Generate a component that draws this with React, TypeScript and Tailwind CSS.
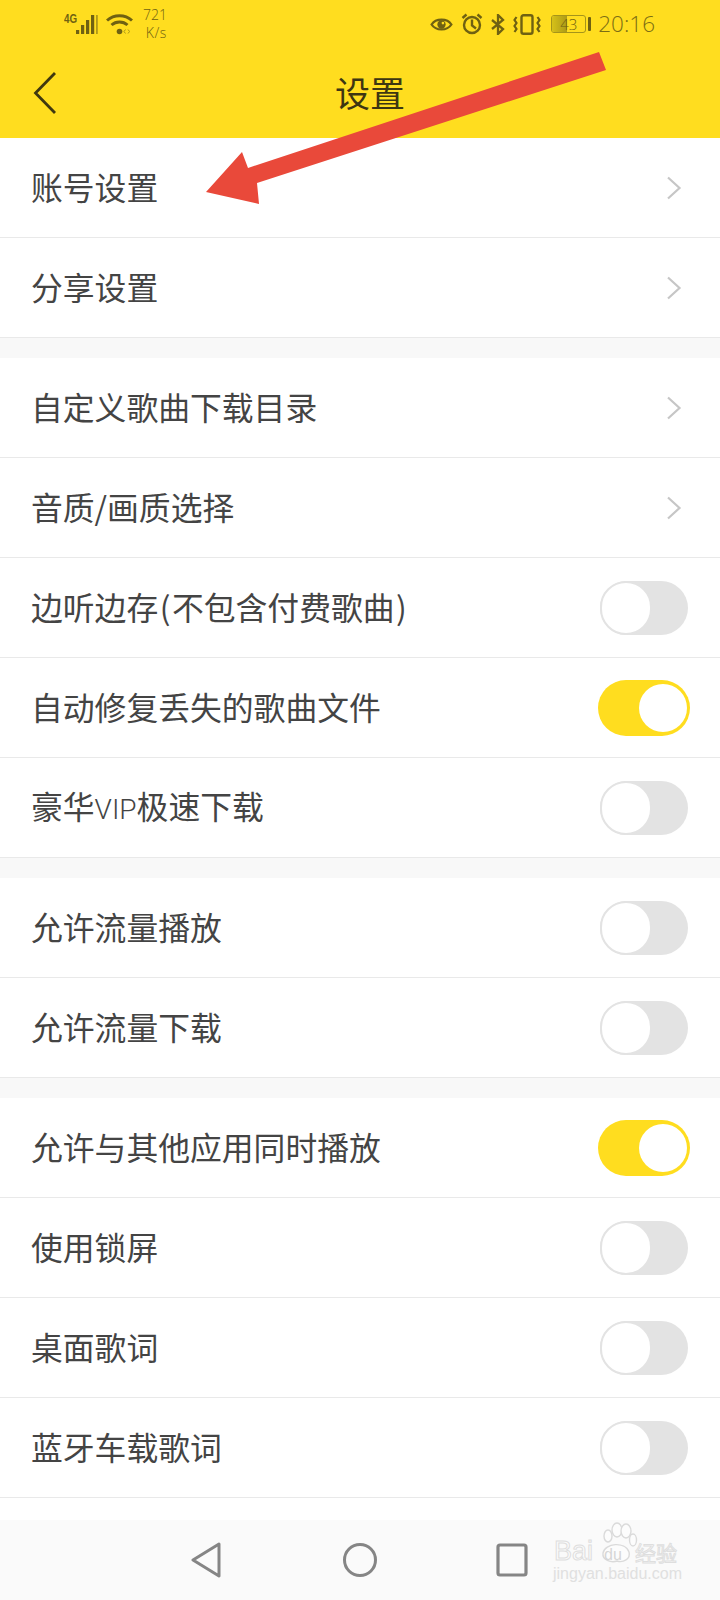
import React from "react";

const FONT = "[font-family:'Noto_Sans_CJK_SC','Noto_Sans',sans-serif]";

function Chevron() {
  return (
    <svg width="16" height="24" viewBox="0 0 16 24" fill="none" className="mr-[38px]">
      <path d="M2 1.5 L13.5 12 L2 22.5" stroke="#c6c6c6" strokeWidth="2.2" />
    </svg>
  );
}

function Toggle({ on }: { on?: boolean }) {
  if (on) {
    return (
      <div className="mr-[30px] flex h-[56px] w-[92px] items-center justify-end rounded-full bg-[#ffdd1f] pr-[3px]">
        <div className="h-[48px] w-[48px] rounded-full bg-white" />
      </div>
    );
  }
  return (
    <div className="mr-[32px] flex h-[54px] w-[88px] items-center rounded-full bg-[#e3e3e3]">
      <div className="h-[54px] w-[52px] rounded-full border-2 border-[#e3e3e3] bg-white" />
    </div>
  );
}

function Row({ label, kind }: { label: React.ReactNode; kind: "chev" | "on" | "off" }) {
  return (
    <div className="flex h-[100px] items-center justify-between border-b border-[#e9e9e9] bg-white pl-[31px]">
      <span className="pb-[2px] text-[31.8px] leading-none text-[#444444]">{label}</span>
      {kind === "chev" ? <Chevron /> : <Toggle on={kind === "on"} />}
    </div>
  );
}

function Gap() {
  return <div className="h-[20px] bg-[#f8f8f8]" />;
}

const ink = "#6f6112";

function StatusLeft() {
  return (
    <div className="flex items-start">
      <span className="mt-[11px] w-[12px] origin-left scale-x-75 text-[13px] font-bold leading-[15px] text-[#6f6112] [font-family:'Liberation_Sans',sans-serif]">
        4G
      </span>
      <svg width="22" height="22" viewBox="0 0 22 22" className="mt-[13px]">
        <rect x="0" y="17" width="3.2" height="4" fill={ink} />
        <rect x="5" y="12" width="3.2" height="9" fill={ink} />
        <rect x="10" y="7" width="3.2" height="14" fill={ink} />
        <rect x="15" y="2" width="3.2" height="19" fill={ink} />
        <rect x="20" y="2" width="1.8" height="19" fill={ink} opacity="0.55" />
      </svg>
      <svg width="27" height="22" viewBox="0 0 27 22" fill="none" className="ml-[8px] mt-[13px]" stroke={ink} strokeWidth="3">
        <path d="M1 7.5 C8 1 19 1 26 7.5" />
        <path d="M5.5 12 C10 8 17 8 21.5 12" />
        <circle cx="13.5" cy="18.5" r="2.8" fill={ink} stroke="none" />
        <path d="M19.5 16.5 L18 18.5 L19.5 20.5 M22 16.5 L23.5 18.5 L22 20.5" stroke="#a8951a" strokeWidth="1" />
      </svg>
      <div className="ml-[10px] mt-[6px] flex w-[24px] flex-col items-end text-[14px] font-light leading-[18px] text-[#6f6112] [font-family:'Open_Sans',sans-serif]">
        <span>721</span>
        <span className="tracking-[0.6px]">K/s</span>
      </div>
    </div>
  );
}

function StatusRight() {
  return (
    <div className="flex items-center">
      <svg width="23" height="17" viewBox="0 0 24 18" fill="none" stroke={ink} strokeWidth="2.4">
        <path d="M1.5 9 C6 2 18 2 22.5 9 C18 16 6 16 1.5 9 Z" />
        <circle cx="12" cy="9" r="4.4" fill={ink} stroke="none" />
        <circle cx="13.5" cy="7.5" r="1.4" fill="#ffdd1f" stroke="none" />
      </svg>
      <svg width="22" height="22" viewBox="0 0 22 22" fill="none" stroke={ink} strokeWidth="2.4" className="ml-[8px]">
        <circle cx="11" cy="12" r="8" />
        <path d="M11 6.5 V12.5 L15 15.5" />
        <path d="M1.5 5 L5.5 1.5 M20.5 5 L16.5 1.5" />
      </svg>
      <svg width="14" height="21" viewBox="0 0 14 21" fill="none" stroke={ink} strokeWidth="2.3" className="ml-[8px]">
        <path d="M1 6 L12 15 L7 20 V1 L12 6 L1 15" />
      </svg>
      <svg width="28" height="21" viewBox="0 0 28 21" fill="none" stroke={ink} strokeWidth="2.4" className="ml-[8px]">
        <rect x="8.5" y="1.2" width="11" height="18.6" rx="2" />
        <path d="M3.5 3 L1.5 6 L3.5 9 L1.5 12 L3.5 15 L1.5 18" strokeWidth="2.2" />
        <path d="M24.5 3 L26.5 6 L24.5 9 L26.5 12 L24.5 15 L26.5 18" strokeWidth="2.2" />
      </svg>
      <div className="ml-[10px] flex items-center">
        <div className="relative flex h-[18px] w-[35px] items-center justify-center rounded-[3px] border border-[#a5941a] text-[15px] font-light leading-none text-[#6f6112] [font-family:'Open_Sans',sans-serif]">
          <div className="absolute inset-y-0 left-0 w-[15px] rounded-l-[2px] bg-linear-to-r from-[#d6c118] to-[#ac9a17]" />
          <span className="relative">43</span>
        </div>
        <div className="ml-[2px] h-[14px] w-[3px] rounded-[1px] bg-[#6f6112]" />
      </div>
      <span className="ml-[7px] text-[22.5px] font-light leading-none text-[#7c6d14] [font-family:'Open_Sans',sans-serif]">
        20:16
      </span>
    </div>
  );
}

function Header() {
  return (
    <header className="h-[138px] bg-[#ffdd1f]">
      <div className="flex h-[48px] justify-between pl-[64px] pr-[65px]">
        <StatusLeft />
        <div className="pt-[13px]">
          <StatusRight />
        </div>
      </div>
      <div className="relative flex h-[90px] items-center justify-center pb-[4px] pl-[20px]">
        <span className="text-[35px] leading-none text-[#3d3612]">设置</span>
        <svg width="26" height="46" viewBox="0 0 26 46" fill="none" className="absolute left-[32px] top-[22px]">
          <path d="M23 3 L3.5 23 L23 43" stroke="#40380f" strokeWidth="2.8" />
        </svg>
      </div>
    </header>
  );
}

function Watermark() {
  const outline = "[-webkit-text-stroke:1px_#dedede] text-[#fbfbfb]";
  return (
    <div className="absolute left-[552px] top-[1522px] h-[62px] w-[130px]">
      <svg width="44" height="42" viewBox="0 0 44 42" fill="#fcfcfc" stroke="#dadada" strokeWidth="1.4" className="absolute left-[45px] top-0">
        <ellipse cx="11" cy="14" rx="4" ry="6" />
        <ellipse cx="20" cy="8" rx="5" ry="7" />
        <ellipse cx="29" cy="9" rx="5" ry="7" />
        <ellipse cx="36" cy="18" rx="3.5" ry="6" />
        <path d="M6 31 C8 21 28 19 32 30 C34 37 26 41 20 39 C14 41 5 38 6 31 Z" />
      </svg>
      <span className="absolute left-[52px] top-[25px] text-[16px] leading-none text-[#d6d6d6] [font-family:'Liberation_Sans',sans-serif]">
        du
      </span>
      <span className={`absolute left-[2px] top-[16px] text-[27px] leading-none [font-family:'Liberation_Sans',sans-serif] ${outline}`}>
        Bai
      </span>
      <span className={`absolute left-[83px] top-[20px] text-[21px] leading-none ${outline}`}>经验</span>
      <span className="absolute left-[1px] top-[44px] text-[16px] leading-none text-[#e0e0e0] [font-family:'Liberation_Sans',sans-serif]">
        jingyan.baidu.com
      </span>
    </div>
  );
}

function NavBar() {
  return (
    <div className="flex h-[80px] items-center bg-[#fafafa] pl-[190px]">
      <svg width="32" height="36" viewBox="0 0 32 36" fill="none" stroke="#858585" strokeWidth="3" strokeLinejoin="round">
        <path d="M29 2 L3 18 L29 34 Z" />
      </svg>
      <svg width="36" height="36" viewBox="0 0 36 36" fill="none" stroke="#858585" strokeWidth="3" className="ml-[120px]">
        <circle cx="18" cy="18" r="15.5" />
      </svg>
      <svg width="32" height="34" viewBox="0 0 32 34" fill="none" stroke="#858585" strokeWidth="3.2" className="ml-[118px]">
        <rect x="2" y="2" width="28" height="30" rx="2" />
      </svg>
    </div>
  );
}

export default function App() {
  const paren = "px-[1.5px]";
  return (
    <div className={`relative h-[1600px] w-[720px] overflow-hidden bg-white ${FONT}`}>
      <Header />
      <Row label="账号设置" kind="chev" />
      <Row label="分享设置" kind="chev" />
      <Gap />
      <Row label="自定义歌曲下载目录" kind="chev" />
      <Row label="音质/画质选择" kind="chev" />
      <Row
        label={
          <>
            边听边存<span className={paren}>(</span>不包含付费歌曲<span className={paren}>)</span>
          </>
        }
        kind="off"
      />
      <Row label="自动修复丢失的歌曲文件" kind="on" />
      <Row
        label={
          <>
            豪华<span className="text-[28px] font-light [font-family:'Roboto',sans-serif]">VIP</span>极速下载
          </>
        }
        kind="off"
      />
      <Gap />
      <Row label="允许流量播放" kind="off" />
      <Row label="允许流量下载" kind="off" />
      <Gap />
      <Row label="允许与其他应用同时播放" kind="on" />
      <Row label="使用锁屏" kind="off" />
      <Row label="桌面歌词" kind="off" />
      <Row label="蓝牙车载歌词" kind="off" />
      <div className="h-[22px] bg-white" />
      <NavBar />
      <Watermark />
      <svg width="720" height="220" viewBox="0 0 720 220" className="absolute left-0 top-0">
        <polygon points="599,52 606,70 257,183 259,204 206,192 242,152 248,168" fill="#e9493a" />
      </svg>
    </div>
  );
}
